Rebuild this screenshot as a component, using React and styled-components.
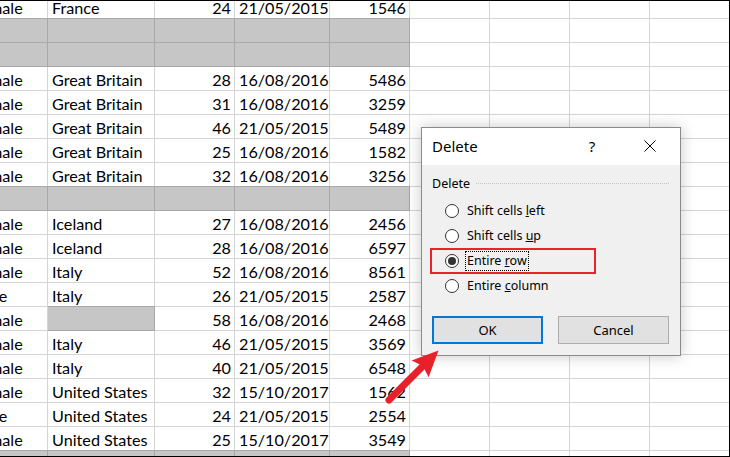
import React from 'react';
import styled, { createGlobalStyle } from 'styled-components';

// spreadsheet with a Delete dialog on top, red annotations over it

const GlobalStyle = createGlobalStyle`
  html, body {
    margin: 0;
    padding: 0;
    background: #fff;
  }
`;

const COLS = '80px 107px 80px 95px 80px 80px 80px 80px 80px 80px';

const Screen = styled.div`
  position: relative;
  width: 730px;
  height: 457px;
  box-sizing: border-box;
  border: 1px solid #000;
  border-left: none;
  overflow: hidden;
  background: #fff;
`;

const Sheet = styled.div`
  margin: -6px 0 0 -32px;
  font-family: Lato, 'Liberation Sans', sans-serif;
  font-size: 16.2px;
  color: #000;
`;

const Row = styled.div`
  display: grid;
  grid-template-columns: ${COLS};
  height: 24px;
`;

const Cell = styled.div`
  box-sizing: border-box;
  padding: 0 4px;
  line-height: 25px;
  white-space: nowrap;
  overflow: hidden;
  text-align: ${props => (props.$num ? 'right' : 'left')};
  padding-right: ${props => (props.$num ? '3px' : '4px')};
  background: ${props => (props.$shaded ? '#c6c6c6' : '#fff')};
  border-right: 1px solid ${props => (props.$shaded ? '#a8a8a8' : '#d4d4d4')};
  border-bottom: 1px solid ${props => (props.$shaded ? '#a8a8a8' : '#d4d4d4')};
  box-shadow: ${props => (props.$shaded ? '0 -1px 0 #a8a8a8' : 'none')};
`;

const Dialog = styled.div`
  position: absolute;
  left: 421px;
  top: 126px;
  width: 260px;
  box-sizing: border-box;
  border: 1px solid #8a8a8a;
  background: #f0f0f0;
  box-shadow: 0 0 14px rgba(0, 0, 0, 0.22);
  font-family: 'Noto Sans', 'Open Sans', sans-serif;
  color: #000;
`;

const TitleBar = styled.div`
  display: flex;
  align-items: center;
  height: 37px;
  padding-left: 10px;
  padding-right: 7px;
  padding-bottom: 2px;
  box-sizing: border-box;
  background: #fff;
  font-size: 15px;
`;

const TitleText = styled.span`
  flex: 1;
`;

const CaptionButton = styled.div`
  width: 46px;
  height: 30px;
  display: flex;
  align-items: center;
  justify-content: center;
  margin-left: ${props => props.$gap || 0}px;
  font-size: 15px;
`;

const Body = styled.div`
  padding: 10px 11px 11px 10px;
  font-size: 12.5px;
`;

const GroupHeader = styled.div`
  display: flex;
  align-items: center;
  gap: 6px;
  height: 16px;
`;

const GroupLine = styled.div`
  flex: 1;
  border-top: 1px dotted #c4c4c4;
`;

const RadioList = styled.div`
  margin-top: 7px;
  display: flex;
  flex-direction: column;
`;

const RadioRow = styled.div`
  position: relative;
  display: flex;
  align-items: center;
  gap: 7px;
  height: 25px;
  padding-left: 13px;

  &::after {
    content: '';
    display: ${props => (props.$marked ? 'block' : 'none')};
    position: absolute;
    left: -2px;
    top: 0;
    width: 166px;
    height: 26px;
    box-sizing: border-box;
    border: 2px solid #e8232b;
  }
`;

const RadioCircle = styled.span`
  width: 14px;
  height: 14px;
  box-sizing: border-box;
  border: 1px solid #333;
  border-radius: 50%;
  background: #fff;
  display: flex;
  align-items: center;
  justify-content: center;

  &::before {
    content: '';
    display: ${props => (props.$checked ? 'block' : 'none')};
    width: 8px;
    height: 8px;
    border-radius: 50%;
    background: #333;
  }
`;

const RadioLabel = styled.span`
  outline: ${props => (props.$focused ? '1px dotted #000' : 'none')};
  padding: 0 1px;
  line-height: 18px;
`;

const Buttons = styled.div`
  margin-top: 18px;
  display: flex;
  justify-content: space-between;
`;

const Button = styled.div`
  width: 111px;
  height: 28px;
  box-sizing: border-box;
  display: flex;
  align-items: center;
  justify-content: center;
  background: #e1e1e1;
  border: ${props => (props.$default ? '2px solid #0078d7' : '1px solid #adadad')};
  font-size: 13px;
`;

const Arrow = styled.svg`
  position: absolute;
  left: 380px;
  top: 341px;
  width: 66px;
  height: 68px;
`;

const rows = [
  ['Female', 'France', '24', '21/05/2015', '1546'],
  null,
  null,
  ['Female', 'Great Britain', '28', '16/08/2016', '5486'],
  ['Female', 'Great Britain', '31', '16/08/2016', '3259'],
  ['Female', 'Great Britain', '46', '21/05/2015', '5489'],
  ['Female', 'Great Britain', '25', '16/08/2016', '1582'],
  ['Female', 'Great Britain', '32', '16/08/2016', '3256'],
  null,
  ['Female', 'Iceland', '27', '16/08/2016', '2456'],
  ['Female', 'Iceland', '28', '16/08/2016', '6597'],
  ['Female', 'Italy', '52', '16/08/2016', '8561'],
  ['Male', 'Italy', '26', '21/05/2015', '2587'],
  ['Female', '', '58', '16/08/2016', '2468'],
  ['Female', 'Italy', '46', '21/05/2015', '3569'],
  ['Female', 'Italy', '40', '21/05/2015', '6548'],
  ['Female', 'United States', '32', '15/10/2017', '1562'],
  ['Male', 'United States', '24', '21/05/2015', '2554'],
  ['Female', 'United States', '25', '15/10/2017', '3549'],
  null,
];

const options = [
  { before: 'Shift cells ', key: 'l', after: 'eft' },
  { before: 'Shift cells ', key: 'u', after: 'p' },
  { before: 'Entire ', key: 'r', after: 'ow', checked: true },
  { before: 'Entire ', key: 'c', after: 'olumn' },
];

const SheetRow = ({ data }) => {
  const blank = !data;
  const values = data || ['', '', '', '', ''];
  return (
    <Row>
      <Cell $shaded={blank}>{values[0]}</Cell>
      <Cell $shaded={blank || values[1] === ''}>{values[1]}</Cell>
      <Cell $shaded={blank} $num>{values[2]}</Cell>
      <Cell $shaded={blank}>{values[3]}</Cell>
      <Cell $shaded={blank} $num>{values[4]}</Cell>
      <Cell />
      <Cell />
      <Cell />
      <Cell />
      <Cell />
    </Row>
  );
};

export default function App() {
  return (
    <>
      <GlobalStyle />
      <Screen>
        <Sheet>
          {rows.map((r, i) => (
            <SheetRow key={i} data={r} />
          ))}
        </Sheet>

        <Dialog>
          <TitleBar>
            <TitleText>Delete</TitleText>
            <CaptionButton>?</CaptionButton>
            <CaptionButton $gap={12}>
              <svg width="12" height="12" viewBox="0 0 12 12">
                <path d="M0.5 0.5 L11.5 11.5 M11.5 0.5 L0.5 11.5" stroke="#000" strokeWidth="1" />
              </svg>
            </CaptionButton>
          </TitleBar>
          <Body>
            <GroupHeader>
              <span>Delete</span>
              <GroupLine />
            </GroupHeader>
            <RadioList>
              {options.map(o => (
                <RadioRow key={o.key} $marked={o.checked}>
                  <RadioCircle $checked={o.checked} />
                  <RadioLabel $focused={o.checked}>
                    {o.before}
                    <u>{o.key}</u>
                    {o.after}
                  </RadioLabel>
                </RadioRow>
              ))}
            </RadioList>
            <Buttons>
              <Button $default>OK</Button>
              <Button>Cancel</Button>
            </Buttons>
          </Body>
        </Dialog>

        <Arrow viewBox="0 0 66 68">
          <g transform="translate(9 58) rotate(-45)">
            <line x1="0" y1="0" x2="48" y2="0" stroke="#e8202a" strokeWidth="7" strokeLinecap="round" />
            <polygon points="44,-12 70,0 44,12 48,0" fill="#e8202a" />
          </g>
        </Arrow>
      </Screen>
    </>
  );
}
